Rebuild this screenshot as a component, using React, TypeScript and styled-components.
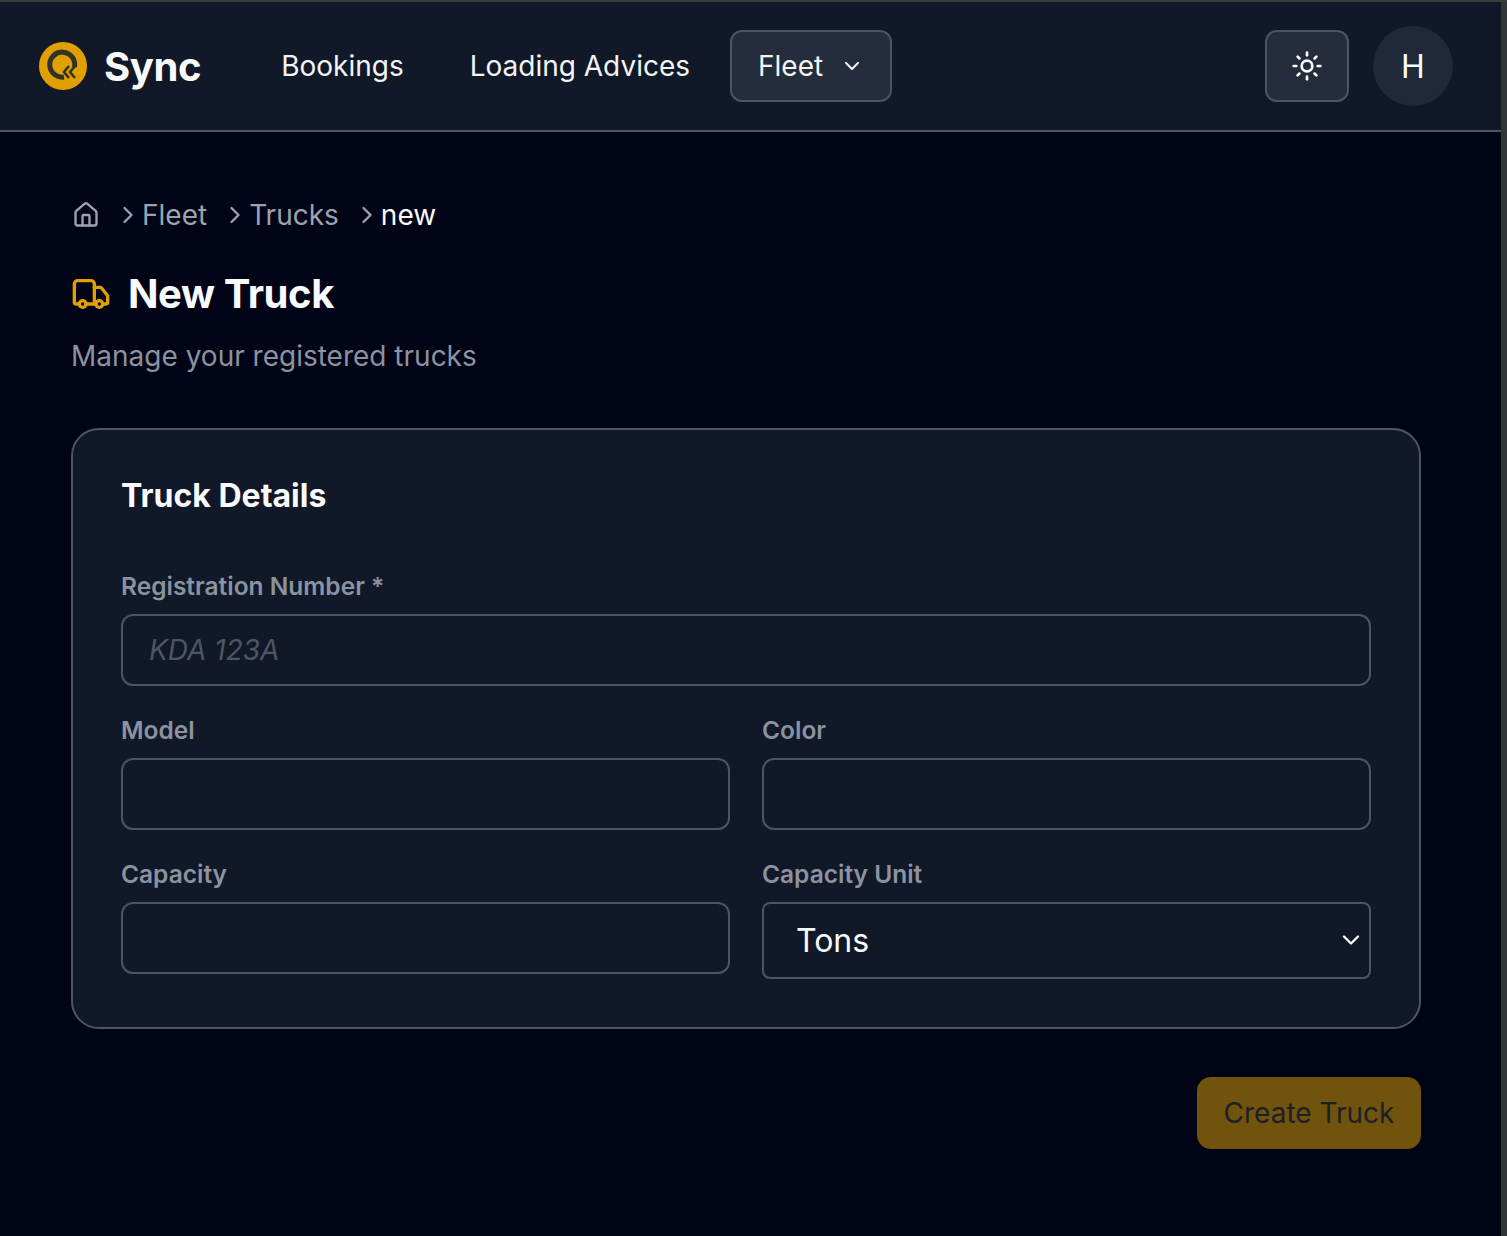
import React from "react";
import styled, { createGlobalStyle } from "styled-components";
import { ChevronDown, ChevronRight, House, Sun, Truck } from "lucide-react";

const Global = createGlobalStyle`
  html, body { margin: 0; padding: 0; background: #020617; }
  body { font-family: Inter, "Liberation Sans", sans-serif; color: #f9fafb; }
  * { box-sizing: border-box; }
`;

const Page = styled.div`
  width: 1507px;
  height: 1236px;
  overflow: hidden;
  display: flex;
  background: #3a3b3c;
  padding-top: 2px;
`;
const Column = styled.div`
  width: 1501px;
  flex: none;
  display: flex;
  flex-direction: column;
  background: #000416;
`;
const Rail = styled.div`
  flex: 1;
  background: #343536;
`;
const Header = styled.header`
  height: 130px;
  flex: none;
  display: flex;
  align-items: center;
  padding: 0 48px 0 39px;
  background: #111827;
  border-bottom: 2px solid #4b5563;
`;
const Brand = styled.div`
  display: flex;
  align-items: center;
  gap: 17px;
  margin-right: 47px;
`;
const BrandName = styled.span`
  font-size: 40px;
  font-weight: 700;
  letter-spacing: -0.4px;
  color: #f9fafb;
`;
const NavLink = styled.a`
  font-size: 28px;
  line-height: 40px;
  padding: 0 33px;
  color: #f3f4f6;
`;
const ActiveNav = styled.button`
  width: 162px;
  height: 72px;
  margin-left: 7px;
  padding: 0 26px;
  display: flex;
  align-items: center;
  justify-content: space-between;
  background: #252d3c;
  border: 2px solid #4b5563;
  border-radius: 12px;
  color: #f3f4f6;
  font: 400 28px Inter, sans-serif;
`;
const Actions = styled.div`
  margin-left: auto;
  display: flex;
  align-items: center;
  gap: 24px;
`;
const IconButton = styled.button`
  width: 84px;
  height: 72px;
  display: flex;
  align-items: center;
  justify-content: center;
  background: #252d3c;
  border: 2px solid #4b5563;
  border-radius: 12px;
  color: #f9fafb;
  padding: 0;
`;
const Avatar = styled.div`
  width: 80px;
  height: 80px;
  border-radius: 50%;
  background: #1f2937;
  display: flex;
  align-items: center;
  justify-content: center;
  font-size: 32px;
  color: #f9fafb;
`;
const Main = styled.main`
  flex: 1;
  padding: 66px 80px 0 71px;
  display: flex;
  flex-direction: column;
`;
const Crumbs = styled.nav`
  display: flex;
  align-items: center;
  height: 34px;
  font-size: 28px;
  color: #9ca3af;
`;
const HomeCrumb = styled.span`
  display: flex;
  margin-left: 1px;
  color: #9ca3af;
`;
const Separator = styled.span`
  display: flex;
  width: 28px;
  margin: 0 ${(p: { $right: number }) => p.$right}px 0 14px;
  color: #9ca3af;
`;
const Current = styled.span`
  color: #f9fafb;
`;
const TitleRow = styled.div`
  margin-top: 38px;
  display: flex;
  align-items: center;
  gap: 17px;
  height: 48px;
  padding-left: 0;
  color: #e0a100;
`;
const Title = styled.h1`
  margin: 0;
  font-size: 40px;
  line-height: 48px;
  font-weight: 700;
  letter-spacing: -0.4px;
  color: #f9fafb;
`;
const Subtitle = styled.p`
  margin: 18px 0 0;
  font-size: 28px;
  line-height: 40px;
  color: #8b92a0;
`;
const Card = styled.section`
  margin-top: 52px;
  height: 601px;
  padding: 48px 48px 0;
  background: #111827;
  border: 2px solid #4b5563;
  border-radius: 28px;
`;
const CardTitle = styled.h2`
  margin: 0 0 56px;
  font-size: 32px;
  line-height: 36px;
  font-weight: 700;
  color: #f9fafb;
`;
const Fields = styled.div`
  display: grid;
  grid-template-columns: 1fr 1fr;
  column-gap: 32px;
  row-gap: 28px;
  align-items: start;
`;
const Field = styled.label<{ $wide?: boolean }>`
  display: flex;
  flex-direction: column;
  gap: 12px;
  grid-column: ${(p) => (p.$wide ? "1 / -1" : "auto")};
`;
const LabelText = styled.span`
  font-size: 24.5px;
  line-height: 32px;
  font-weight: 600;
  color: #8b92a0;
`;
const Input = styled.input`
  width: 100%;
  height: 72px;
  padding: 0 26px;
  background: #111827;
  border: 2px solid #4b5563;
  border-radius: 12px;
  color: #f9fafb;
  font: 400 28px Inter, sans-serif;
  outline: none;
  &::placeholder {
    color: #4f5663;
    font-style: italic;
    opacity: 1;
  }
`;
const SelectWrap = styled.div`
  position: relative;
  color: #f9fafb;
`;
const Select = styled.select`
  display: block;
  width: 100%;
  height: 77px;
  padding: 0 32px;
  appearance: none;
  background: #111827;
  border: 2px solid #4b5563;
  border-radius: 8px;
  color: #f9fafb;
  font: 400 32px Inter, sans-serif;
  outline: none;
`;
const SelectChevron = styled.span`
  position: absolute;
  top: 24px;
  right: 0;
  display: flex;
  width: 34px;
  pointer-events: none;
`;
const Footer = styled.div`
  margin-top: 48px;
  display: flex;
  justify-content: flex-end;
`;
const Submit = styled.button`
  width: 224px;
  height: 72px;
  background: #70530c;
  border: 0;
  border-radius: 14px;
  color: #1d1f24;
  font: 400 28px Inter, sans-serif;
`;

const Logo = () => (
  <svg width="48" height="48" viewBox="0 0 48 48" aria-hidden="true">
    <circle cx="24" cy="24" r="24" fill="#e0a100" />
    <path d="M25 35 A12.5 12.5 0 1 1 35.5 25" fill="none" stroke="#33312c" strokeWidth="5" />
    <path d="M30 24 L25 30 L30 36 M36 24 L31 30 L36 36" fill="none" stroke="#33312c" strokeWidth="2.6" />
  </svg>
);

export default function App() {
  return (
    <Page>
      <Global />
      <Column>
        <Header>
          <Brand>
            <Logo />
            <BrandName>Sync</BrandName>
          </Brand>
          <NavLink>Bookings</NavLink>
          <NavLink>Loading Advices</NavLink>
          <ActiveNav>
            Fleet
            <ChevronDown size={24} />
          </ActiveNav>
          <Actions>
            <IconButton aria-label="Theme">
              <Sun size={32} />
            </IconButton>
            <Avatar>H</Avatar>
          </Actions>
        </Header>
        <Main>
          <Crumbs>
            <HomeCrumb><House size={28} /></HomeCrumb>
            <Separator $right={0}><ChevronRight size={28} /></Separator>
            <span>Fleet</span>
            <Separator $right={0}><ChevronRight size={28} /></Separator>
            <span>Trucks</span>
            <Separator $right={0}><ChevronRight size={28} /></Separator>
            <Current>new</Current>
          </Crumbs>
          <TitleRow>
            <Truck size={40} />
            <Title>New Truck</Title>
          </TitleRow>
          <Subtitle>Manage your registered trucks</Subtitle>
          <Card>
            <CardTitle>Truck Details</CardTitle>
            <Fields>
              <Field $wide>
                <LabelText>Registration Number *</LabelText>
                <Input placeholder="KDA 123A" />
              </Field>
              <Field>
                <LabelText>Model</LabelText>
                <Input />
              </Field>
              <Field>
                <LabelText>Color</LabelText>
                <Input />
              </Field>
              <Field>
                <LabelText>Capacity</LabelText>
                <Input />
              </Field>
              <Field>
                <LabelText>Capacity Unit</LabelText>
                <SelectWrap>
                  <Select defaultValue="Tons">
                    <option>Tons</option>
                  </Select>
                  <SelectChevron><ChevronDown size={28} /></SelectChevron>
                </SelectWrap>
              </Field>
            </Fields>
          </Card>
          <Footer>
            <Submit>Create Truck</Submit>
          </Footer>
        </Main>
      </Column>
      <Rail />
    </Page>
  );
}
